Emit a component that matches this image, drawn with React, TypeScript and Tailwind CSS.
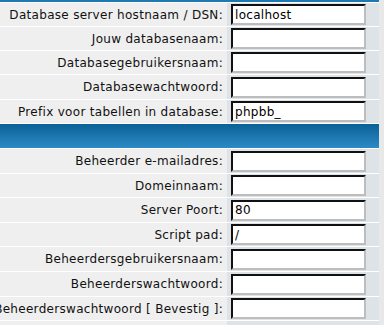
import React from "react";

type Field = { label: string; value?: string; h: string };

const dbFields: Field[] = [
  { label: "Database server hostnaam / DSN:", value: "localhost", h: "h-[23px]" },
  { label: "Jouw databasenaam:", h: "h-[23px]" },
  { label: "Databasegebruikersnaam:", h: "h-[23px]" },
  { label: "Databasewachtwoord:", h: "h-[24px]" },
  { label: "Prefix voor tabellen in database:", value: "phpbb_", h: "h-[23px]" },
];

const adminFields: Field[] = [
  { label: "Beheerder e-mailadres:", h: "h-[24px]" },
  { label: "Domeinnaam:", h: "h-[23px]" },
  { label: "Server Poort:", value: "80", h: "h-[24px]" },
  { label: "Script pad:", value: "/", h: "h-[23px]" },
  { label: "Beheerdersgebruikersnaam:", h: "h-[24px]" },
  { label: "Beheerderswachtwoord:", h: "h-[24px]" },
  { label: "Beheerderswachtwoord [ Bevestig ]:", h: "h-[23px]" },
];

function Row({ field }: { field: Field }) {
  return (
    <div className={`flex ${field.h}`}>
      <div className="w-[227px] bg-[#efefef] flex items-center justify-end overflow-hidden whitespace-nowrap pr-[4px] shrink-0">
        <span className="shrink-0">{field.label}</span>
      </div>
      <div className="flex-1 bg-[#dee3e7] flex items-center pl-[4px]">
        <input
          type="text"
          readOnly
          value={field.value ?? ""}
          className="w-[135px] h-[21px] bg-white border-2 border-t-[#111] border-l-[#111] border-b-[#bdbdbd] border-r-[#bdbdbd] px-[2px] text-[12px] tracking-[0.3px] text-black outline-none"
          style={{ fontFamily: "'DejaVu Sans', Verdana, sans-serif" }}
        />
      </div>
    </div>
  );
}

export default function App() {
  return (
    <div
      className="w-[384px] h-[325px] bg-[#e8e8e8] overflow-hidden flex text-[12px] tracking-[0.3px] text-[#111]"
      style={{ fontFamily: "'DejaVu Sans', Verdana, sans-serif" }}
    >
      <div className="w-[379px] h-full flex flex-col gap-px bg-white">
        <div className="h-[2px] bg-[#1e78b2]" />
        {dbFields.map((f) => (
          <Row key={f.label} field={f} />
        ))}
        {/* section header bar */}
        <div className="h-[24px] bg-gradient-to-b from-[#0a6196] to-[#2c8ac6]" />
        {adminFields.map((f) => (
          <Row key={f.label} field={f} />
        ))}
        <div className="flex-1 flex">
          <div className="w-[227px] bg-[#efefef]" />
          <div className="flex-1 bg-[#dee3e7]" />
        </div>
      </div>
    </div>
  );
}
